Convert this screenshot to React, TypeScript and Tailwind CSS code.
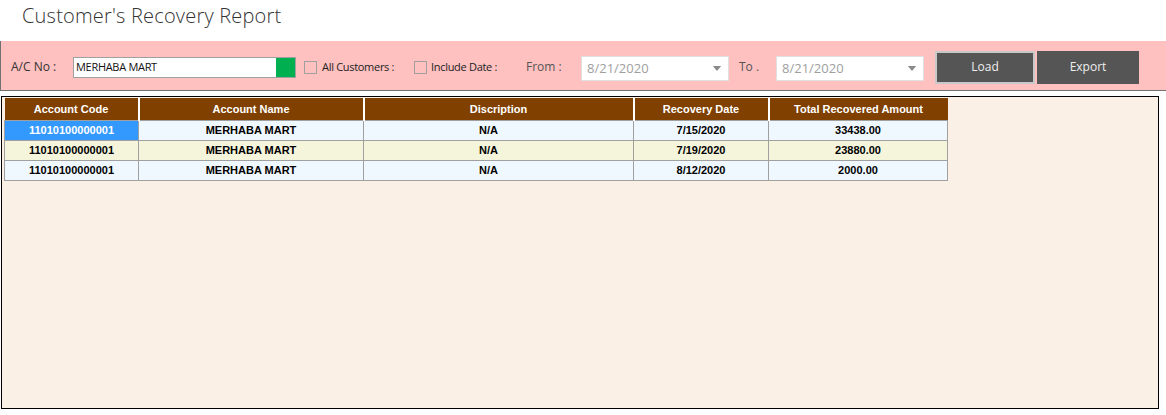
type Row = {
  code: string;
  name: string;
  desc: string;
  date: string;
  amount: string;
};

const rows: Row[] = [
  { code: '11010100000001', name: 'MERHABA MART', desc: 'N/A', date: '7/15/2020', amount: '33438.00' },
  { code: '11010100000001', name: 'MERHABA MART', desc: 'N/A', date: '7/19/2020', amount: '23880.00' },
  { code: '11010100000001', name: 'MERHABA MART', desc: 'N/A', date: '8/12/2020', amount: '2000.00' },
];

const cols = [
  { label: 'Account Code', w: 'w-[134px]' },
  { label: 'Account Name', w: 'w-[225px]' },
  { label: 'Discription', w: 'w-[270px]' },
  { label: 'Recovery Date', w: 'w-[135px]' },
  { label: 'Total Recovered Amount', w: 'w-[179px]' },
];

function Check() {
  return <span className="inline-block h-[13px] w-[13px] shrink-0 border border-[#a0a0a0] bg-[#ffc0c0]" />;
}

function DatePick() {
  return (
    <div className="mt-[3px] flex h-[25px] w-[148px] shrink-0 items-center justify-between border border-[#e0e0e0] bg-white pl-[5px] pr-[6px]">
      <span className="text-[13px] text-[#a0a0a0]">8/21/2020</span>
      <svg viewBox="0 0 10 6" className="h-[5px] w-[10px]" aria-hidden="true">
        <path d="M0 0h10L5 6z" fill="#8a8a8a" />
      </svg>
    </div>
  );
}

export default function App() {
  return (
    <div className="flex h-[415px] w-[1166px] flex-col bg-white font-['Open_Sans',sans-serif] text-[#333]">
      <div className="h-[41px] pl-[22px] pt-[1px] text-[20px] font-light tracking-[0.2px] text-[#333]">
        Customer&apos;s Recovery Report
      </div>

      <div className="flex h-[50px] items-center border-b border-l border-[#707070] bg-[#ffc0c0] pt-[3px] text-[12px]">
        <span className="ml-[10px] w-[62px] shrink-0 text-[12px] text-[#333]">A/C No :</span>
        <div className="mt-[1px] flex h-[21px] w-[223px] shrink-0 items-center border border-[#a0a0a0] bg-white">
          <span className="flex-1 pl-[2px] text-[11px] tracking-[-0.3px] text-[#111]">MERHABA MART</span>
          <span className="h-full w-[19px] bg-[#00b050]" />
        </div>
        <div className="ml-[8px] flex w-[110px] shrink-0 items-center gap-[5px]">
          <Check />
          <span className="text-[11px] tracking-[-0.3px] text-[#222]">All Customers :</span>
        </div>
        <div className="flex w-[112px] shrink-0 items-center gap-[4px]">
          <Check />
          <span className="text-[11px] tracking-[-0.3px] text-[#222]">Include Date :</span>
        </div>
        <span className="w-[55px] shrink-0 text-[12px] text-[#555]">From :</span>
        <DatePick />
        <span className="ml-[10px] w-[37px] shrink-0 text-[12px] text-[#555]">To .</span>
        <DatePick />
        <button className="ml-[11px] h-[33px] w-[100px] shrink-0 border-2 border-[#c8c8c8] bg-[#555] text-[12px] text-[#eee]">
          Load
        </button>
        <button className="ml-[2px] h-[33px] w-[102px] shrink-0 bg-[#555] text-[12px] text-[#eee]">
          Export
        </button>
      </div>

      <div className="ml-[1px] mt-[5px] h-[313px] w-[1158px] border border-black bg-[#faf0e6] pl-[2px] pt-[1px]">
        <table className="border-collapse font-['Liberation_Sans',sans-serif] text-[11px] font-bold">
          <thead>
            <tr className="h-[22px] bg-[#804000] text-white">
              {cols.map((c, i) => (
                <th
                  key={c.label}
                  className={`${c.w} border-[#804000] p-0 text-center font-bold ${i > 0 ? 'border-l-2 border-l-white' : ''}`}
                >
                  {c.label}
                </th>
              ))}
            </tr>
          </thead>
          <tbody>
            {rows.map((r, i) => (
              <tr key={i} className={`h-[20px] text-black ${i % 2 === 1 ? 'bg-[#f5f5dc]' : 'bg-[#f0f8ff]'}`}>
                <td className={`border border-[#a0a0a0] p-0 text-center ${i === 0 ? 'bg-[#3399ff] text-white' : ''}`}>
                  {r.code}
                </td>
                <td className="border border-[#a0a0a0] p-0 text-center">{r.name}</td>
                <td className="border border-[#a0a0a0] p-0 pr-[20px] text-center">{r.desc}</td>
                <td className="border border-[#a0a0a0] p-0 text-center">{r.date}</td>
                <td className="border border-[#a0a0a0] p-0 text-center">{r.amount}</td>
              </tr>
            ))}
          </tbody>
        </table>
      </div>
    </div>
  );
}
